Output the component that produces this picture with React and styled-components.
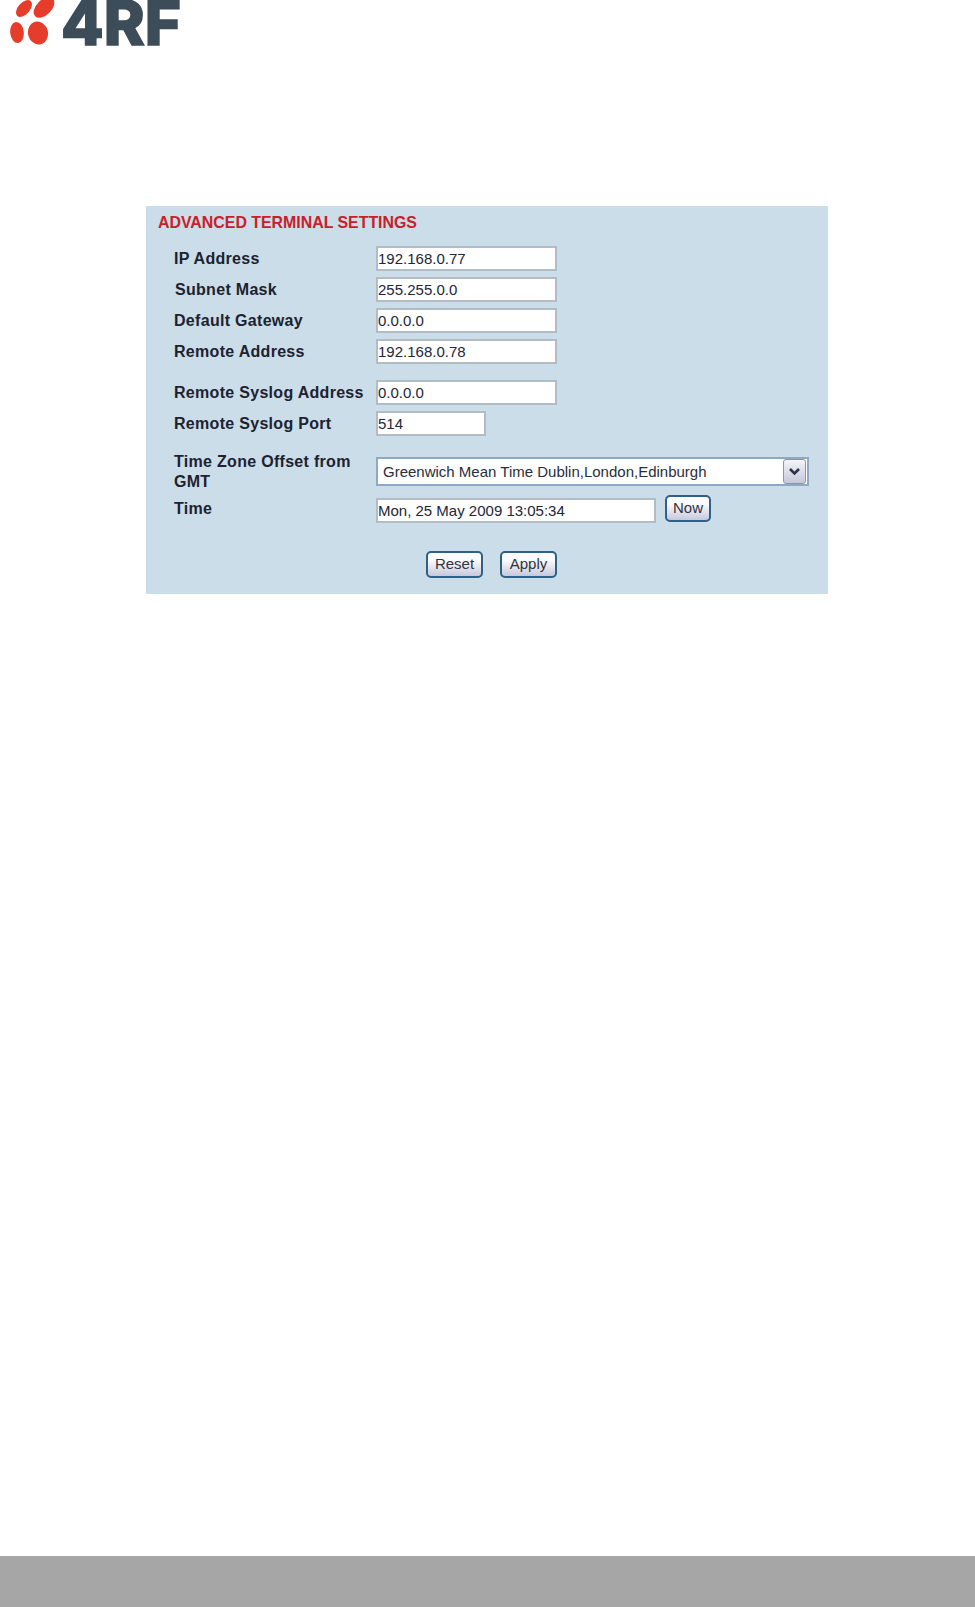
import styled, { createGlobalStyle } from "styled-components";

const GlobalStyle = createGlobalStyle`
  html, body {
    margin: 0;
    padding: 0;
    background: #fff;
  }
`;

const Page = styled.div`
  width: 975px;
  height: 1607px;
  display: flex;
  flex-direction: column;
  font-family: "Liberation Sans", Arial, sans-serif;
  overflow: hidden;
`;

const LogoBar = styled.header`
  height: 46px;
  padding-left: 10px;
`;

const Panel = styled.section`
  width: 682px;
  height: 388px;
  margin: 160px 0 0 146px;
  padding: 9px 0 0 12px;
  box-sizing: border-box;
  background: #cbdde8;
`;

const Heading = styled.h2`
  margin: 0 0 15px;
  font-size: 15.9px;
  line-height: 16px;
  font-weight: 700;
  color: #c8202a;
`;

const Form = styled.form`
  display: flex;
  flex-direction: column;
  padding-left: 16px;
`;

const Group = styled.div`
  display: flex;
  flex-direction: column;
  gap: 6px;
  margin-bottom: ${(props) => props.$after || 0}px;
`;

const Row = styled.div`
  display: grid;
  grid-template-columns: 202px 1fr;
  align-items: center;
  min-height: 25px;
`;

const Label = styled.label`
  font-size: 16px;
  line-height: 20px;
  font-weight: 700;
  letter-spacing: 0.3px;
  color: #1c2230;
  padding-left: ${(props) => props.$nudge || 0}px;
  margin-top: ${(props) => props.$drop || 0}px;
`;

const Field = styled.input`
  box-sizing: border-box;
  display: block;
  width: ${(props) => props.$width}px;
  height: 25px;
  padding: 0;
  border: 2px solid #b2bcc4;
  border-radius: 0;
  outline: none;
  background: #fff;
  font: 15px "Liberation Sans", Arial, sans-serif;
  color: #22263a;
`;

const SelectBox = styled.div`
  box-sizing: border-box;
  width: 433px;
  height: 29px;
  display: flex;
  align-items: center;
  justify-content: space-between;
  padding: 0 1px 0 5px;
  border: 2px solid #8fa9c2;
  background: #fff;
  font-size: 15px;
  color: #2a2e3a;
`;

const SelectArrow = styled.span`
  box-sizing: border-box;
  width: 23px;
  height: 25px;
  display: flex;
  align-items: center;
  justify-content: center;
  border: 1px solid #8a97a8;
  border-radius: 3px;
  background: linear-gradient(#f4f4f8, #c6c8da);
`;

const TimeControls = styled.div`
  display: flex;
  align-items: flex-start;
  gap: 9px;
`;

const Button = styled.button`
  box-sizing: border-box;
  width: ${(props) => props.$width}px;
  height: 27px;
  padding: 0 0 2px;
  border: 2px solid #2f6088;
  border-radius: 5px;
  background: linear-gradient(#fbfbfd 30%, #c7c8dc);
  font: 15px "Liberation Sans", Arial, sans-serif;
  color: #30343f;
`;

const NowButton = styled(Button)`
  margin-top: -3px;
`;

const Actions = styled.div`
  display: flex;
  gap: 17px;
  margin: 28px 0 0 252px;
`;

const Footer = styled.footer`
  margin-top: auto;
  height: 51px;
  background: #a6a6a6;
`;

const Logo = () => (
  <svg width="176" height="46" viewBox="0 0 176 46" aria-label="4RF">
    <g fill="#e53d2a">
      <ellipse cx="14" cy="8.5" rx="5.8" ry="10" transform="rotate(42 14 8.5)" />
      <ellipse cx="34" cy="7.5" rx="7.6" ry="12.5" transform="rotate(45 34 7.5)" />
      <ellipse cx="7" cy="32.5" rx="6.8" ry="10.5" transform="rotate(-6 7 32.5)" />
      <ellipse cx="28" cy="33" rx="10" ry="11.5" transform="rotate(-14 28 33)" />
    </g>
    <text
      x="51"
      y="44.5"
      textLength="120"
      lengthAdjust="spacingAndGlyphs"
      fill="#3c4c58"
      stroke="#3c4c58"
      strokeWidth="1.5"
      fontFamily="Inter, 'Liberation Sans', sans-serif"
      fontWeight="800"
      fontSize="62"
    >
      4RF
    </text>
  </svg>
);

const Chevron = () => (
  <svg width="13" height="9" viewBox="0 0 13 9">
    <path d="M2 2 L6.5 6.5 L11 2" fill="none" stroke="#2b3344" strokeWidth="2.6" />
  </svg>
);

const App = () => {
  return (
    <Page>
      <GlobalStyle />
      <LogoBar>
        <Logo />
      </LogoBar>
      <Panel>
        <Heading>ADVANCED TERMINAL SETTINGS</Heading>
        <Form>
          <Group $after={16}>
            <Row>
              <Label>IP Address</Label>
              <Field $width={181} defaultValue="192.168.0.77" />
            </Row>
            <Row>
              <Label $nudge={1}>Subnet Mask</Label>
              <Field $width={181} defaultValue="255.255.0.0" />
            </Row>
            <Row>
              <Label>Default Gateway</Label>
              <Field $width={181} defaultValue="0.0.0.0" />
            </Row>
            <Row>
              <Label>Remote Address</Label>
              <Field $width={181} defaultValue="192.168.0.78" />
            </Row>
          </Group>
          <Group $after={14}>
            <Row>
              <Label>Remote Syslog Address</Label>
              <Field $width={181} defaultValue="0.0.0.0" />
            </Row>
            <Row>
              <Label>Remote Syslog Port</Label>
              <Field $width={110} defaultValue="514" />
            </Row>
          </Group>
          <Group>
            <Row>
              <Label $drop={2}>
                Time Zone Offset from
                <br />
                GMT
              </Label>
              <SelectBox>
                Greenwich Mean Time Dublin,London,Edinburgh
                <SelectArrow>
                  <Chevron />
                </SelectArrow>
              </SelectBox>
            </Row>
            <Row>
              <Label $drop={-4}>Time</Label>
              <TimeControls>
                <Field $width={280} defaultValue="Mon, 25 May 2009 13:05:34" />
                <NowButton type="button" $width={46}>
                  Now
                </NowButton>
              </TimeControls>
            </Row>
          </Group>
          <Actions>
            <Button type="button" $width={57}>
              Reset
            </Button>
            <Button type="button" $width={57}>
              Apply
            </Button>
          </Actions>
        </Form>
      </Panel>
      <Footer />
    </Page>
  );
};

export default App;
